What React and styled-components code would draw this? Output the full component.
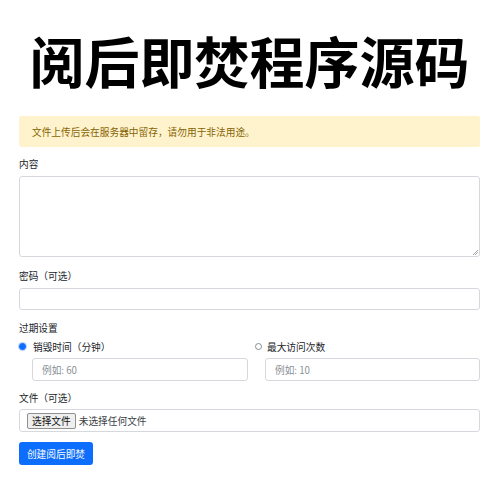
import React from "react";
import styled, { createGlobalStyle } from "styled-components";

const Global = createGlobalStyle`
  html, body { margin: 0; padding: 0; background: #fff; }
  body { font-family: "Noto Sans CJK SC", "Noto Sans", sans-serif; color: #212529; }
  * { box-sizing: border-box; }
`;

const Page = styled.div`
  width: 500px;
  padding: 0 20px 0 19px;
  display: flex;
  flex-direction: column;
`;

const Title = styled.h1`
  margin: 0;
  height: 116px;
  padding-top: 19px;
  text-align: center;
  font-size: 55px;
  line-height: 80px;
  font-weight: 700;
  color: #000;
  letter-spacing: 0;
`;

const Alert = styled.div`
  background: #fff3cd;
  color: #856404;
  border-radius: 2px;
  height: 31px;
  padding: 0 13px;
  display: flex;
  align-items: center;
  font-size: 9.7px;
`;

const Label = styled.div`
  font-size: 9.7px;
  line-height: 15px;
  color: #212529;
  margin-top: ${(p) => p.$mt}px;
  margin-bottom: ${(p) => p.$mb}px;
`;

const TextArea = styled.div`
  height: 81px;
  border: 1px solid #d5d9dd;
  border-radius: 3px;
  position: relative;
  &::after {
    content: "";
    position: absolute;
    right: 1px;
    bottom: 1px;
    width: 5px;
    height: 5px;
    background: linear-gradient(135deg, transparent 45%, #aaa 45%, #aaa 55%, transparent 55%, transparent 70%, #aaa 70%, #aaa 80%, transparent 80%);
  }
`;

const Input = styled.div`
  height: ${(p) => p.$h || 22}px;
  border: 1px solid #d5d9dd;
  border-radius: 3px;
  display: flex;
  align-items: center;
  padding: 0 9px;
  font-size: 9.7px;
  color: #8a9096;
`;

const Options = styled.div`
  display: grid;
  grid-template-columns: 236px 1fr;
`;

const Check = styled.div`
  display: flex;
  flex-direction: column;
`;

const CheckRow = styled.div`
  display: flex;
  align-items: center;
  height: 15px;
  font-size: 9.7px;
  color: #212529;
  gap: ${(p) => (p.$checked ? 7 : 5)}px;
  margin-bottom: 4px;
`;

const Radio = styled.span`
  width: 7px;
  height: 7px;
  border-radius: 50%;
  flex: none;
  background: ${(p) => (p.$checked ? "#0d6efd" : "#fff")};
  border: 1px solid ${(p) => (p.$checked ? "#0d6efd" : "#8a8f94")};
  box-shadow: ${(p) => (p.$checked ? "0 0 0 1px #b8d3fb" : "none")};
`;

const Indented = styled.div`
  padding-left: ${(p) => p.$pl}px;
  padding-right: ${(p) => p.$pr || 0}px;
`;

const FileBox = styled.div`
  height: 23px;
  border: 1px solid #d5d9dd;
  border-radius: 3px;
  display: flex;
  align-items: center;
  padding-left: 7px;
  gap: 3px;
  font-size: 9.7px;
  color: #3a3f44;
`;

const FileButton = styled.span`
  height: 16px;
  padding: 0 4px;
  display: flex;
  align-items: center;
  background: #efefef;
  border: 1px solid #8f8f8f;
  border-radius: 2px;
  color: #111;
  font-size: 9.7px;
`;

const Submit = styled.button`
  margin-top: 10px;
  align-self: flex-start;
  width: 74px;
  height: 23px;
  border: none;
  border-radius: 3px;
  background: #0d6efd;
  color: #fff;
  font-family: inherit;
  font-size: 9.7px;
  padding: 0;
`;

export default function App() {
  return (
    <>
      <Global />
      <Page>
        <Title>阅后即焚程序源码</Title>
        <Alert>文件上传后会在服务器中留存，请勿用于非法用途。</Alert>
        <Label $mt={10} $mb={4}>内容</Label>
        <TextArea />
        <Label $mt={12} $mb={4}>密码（可选）</Label>
        <Input $h={22} />
        <Label $mt={11} $mb={3}>过期设置</Label>
        <Options>
          <Check>
            <CheckRow $checked>
              <Radio $checked />
              销毁时间（分钟）
            </CheckRow>
            <Indented $pl={13} $pr={7}>
              <Input $h={23}>例如: 60</Input>
            </Indented>
          </Check>
          <Check>
            <CheckRow>
              <Radio />
              最大访问次数
            </CheckRow>
            <Indented $pl={10}>
              <Input $h={23}>例如: 10</Input>
            </Indented>
          </Check>
        </Options>
        <Label $mt={10} $mb={3}>文件（可选）</Label>
        <FileBox>
          <FileButton>选择文件</FileButton>
          未选择任何文件
        </FileBox>
        <Submit>创建阅后即焚</Submit>
      </Page>
    </>
  );
}
